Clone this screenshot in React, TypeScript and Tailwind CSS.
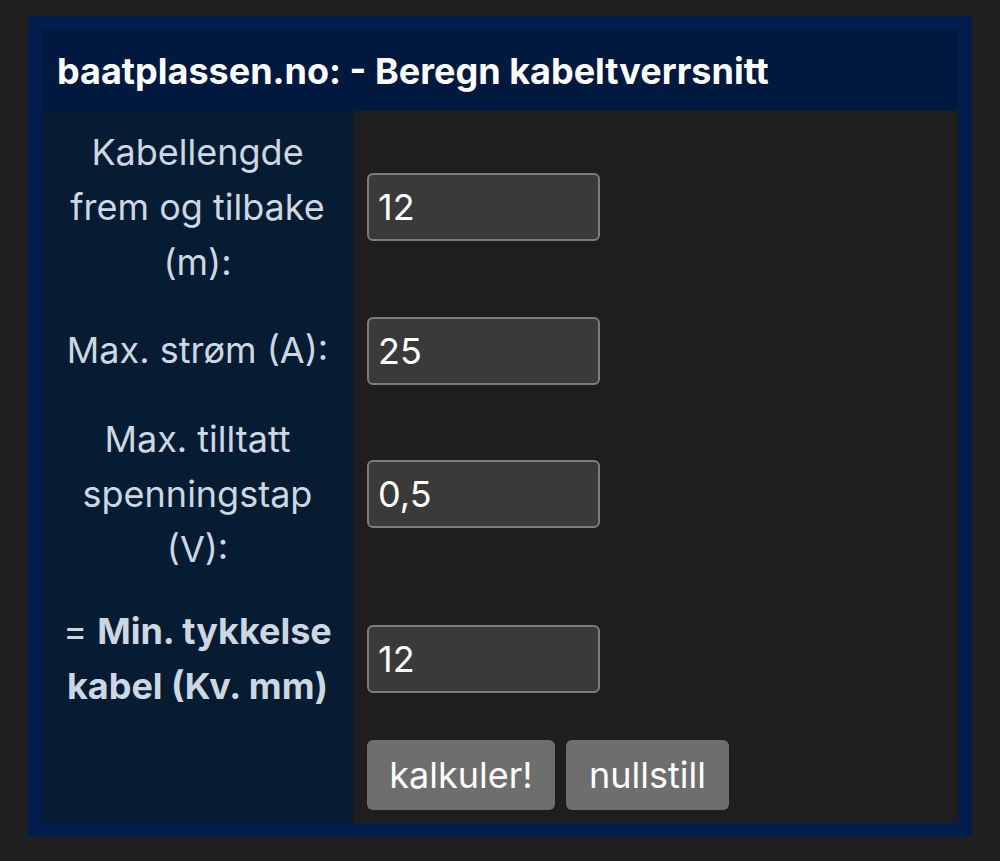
import React from "react";

const labelCls =
  "w-[311px] bg-[#061c33] px-[14px] py-[13.5px] text-center align-middle text-[36px] leading-[55px] text-[#cdd7e2]";
const cellCls = "bg-[#1e1e1e] pl-[14px] py-[13.5px] align-middle";
const inputCls =
  "block h-[68px] w-[233px] rounded-[6px] border-2 border-[#7c7c7c] bg-[#3a3a3a] px-[9px] text-[36px] text-white outline-none";

export default function App() {
  return (
    <div
      className="min-h-[861px] w-full bg-[#1f1f1f] px-[28px] pt-[16px]"
      style={{ fontFamily: "Inter, 'Noto Sans', sans-serif" }}
    >
      <div className="w-[944px] border-[14px] border-[#001d4d] bg-[#01183f]">
        <div className="flex h-[81px] items-center pl-[15px] text-[36px] font-bold text-white">
          baatplassen.no: - Beregn kabeltverrsnitt
        </div>
        <table className="w-full border-collapse">
          <tbody>
            <tr>
              <td className={labelCls}>Kabellengde frem og tilbake (m):</td>
              <td className={cellCls}>
                <input className={inputCls} defaultValue="12" />
              </td>
            </tr>
            <tr>
              <td className={labelCls}>Max. strøm (A):</td>
              <td className={cellCls}>
                <input className={inputCls} defaultValue="25" />
              </td>
            </tr>
            <tr>
              <td className={labelCls}>Max. tilltatt spenningstap (V):</td>
              <td className={cellCls}>
                <input className={inputCls} defaultValue="0,5" />
              </td>
            </tr>
            <tr>
              <td className={labelCls}>
                = <b className="font-bold">Min. tykkelse kabel (Kv. mm)</b>
              </td>
              <td className={cellCls}>
                <input className={inputCls} defaultValue="12" />
              </td>
            </tr>
            <tr>
              <td className={labelCls}></td>
              <td className="bg-[#1e1e1e] pl-[14px] pt-[13px] pb-[13px] align-middle">
                <div className="flex gap-[11px]">
                  <button className="h-[70px] w-[188px] rounded-[6px] bg-[#6e6e6e] text-[36px] text-white">
                    kalkuler!
                  </button>
                  <button className="h-[70px] w-[163px] rounded-[6px] bg-[#6e6e6e] text-[36px] text-white">
                    nullstill
                  </button>
                </div>
              </td>
            </tr>
          </tbody>
        </table>
      </div>
    </div>
  );
}
